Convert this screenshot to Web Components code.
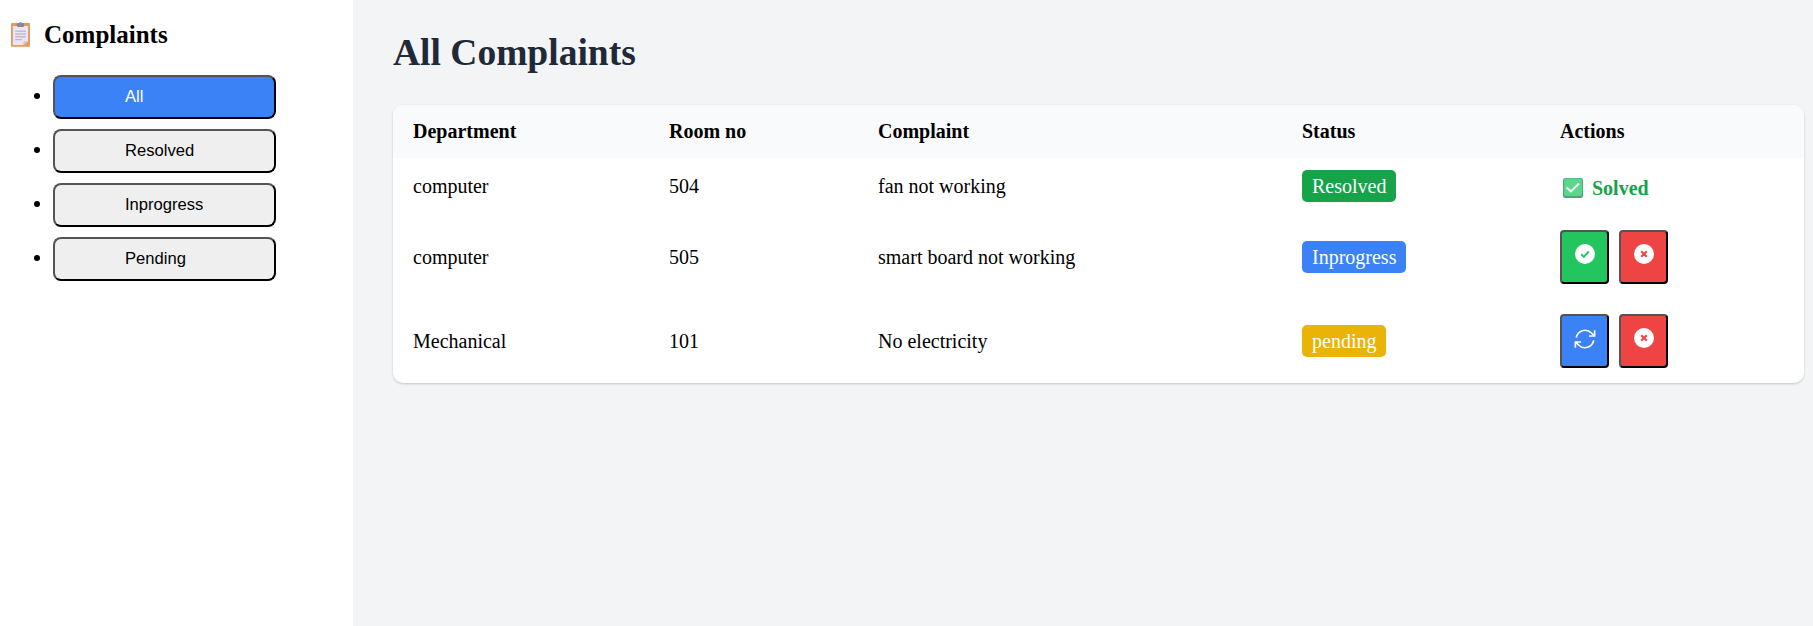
<!DOCTYPE html>
<html>
<head>
<meta charset="utf-8">
<title>Complaints</title>
<style>
  html, body { margin: 0; height: 100%; }
  body { font-family: "Liberation Serif", serif; font-size: 20px; }
</style>
</head>
<body>
<complaints-app></complaints-app>

<script>
const ICONS = {
  check: `<svg width="20" height="20" viewBox="0 0 20 20"><circle cx="10" cy="10" r="10" fill="#fff"/><path d="M6.2 10.3l2.6 2.6 5-5.4" fill="none" stroke="#22c55e" stroke-width="2"/></svg>`,
  cross: `<svg width="20" height="20" viewBox="0 0 20 20"><circle cx="10" cy="10" r="10" fill="#fff"/><path d="M7.2 7.2l5.6 5.6M12.8 7.2l-5.6 5.6" fill="none" stroke="#ef4444" stroke-width="2"/></svg>`,
  sync: `<svg width="22" height="22" viewBox="0 0 24 24" fill="none" stroke="#fff" stroke-width="1.8"><path d="M2.5 10.5A9.7 9.7 0 0 1 19 5.5l3 3"/><path d="M22.5 2.5v6.2h-6.2"/><path d="M21.5 13.5A9.7 9.7 0 0 1 5 18.5l-3-3"/><path d="M1.5 21.5v-6.2h6.2"/></svg>`
};

class ClipboardIcon extends HTMLElement {
  constructor() {
    super();
    this.attachShadow({ mode: "open" });
    this.shadowRoot.innerHTML = `
    <style>
      :host { display: block; width: 19px; height: 25px; }
      svg { display: block; }
    </style>
    <svg width="19" height="25" viewBox="0 0 20 26">
      <rect x="0" y="1" width="20" height="25" rx="1" fill="#e39a5f"/>
      <path d="M2 4h16v16l-5 4H2z" fill="#ebe5f3"/>
      <path d="M13 24l5-4h-5z" fill="#cfc6dc"/>
      <rect x="6" y="1" width="8" height="4" rx="1.5" fill="#8a8494"/>
      <rect x="8.5" y="0" width="3" height="2" rx="1" fill="#8a8494"/>
      <path d="M4.5 9.5h11M4.5 12.5h11M4.5 15.5h11M4.5 18.5h7" stroke="#a9a3b5" stroke-width="1"/>
    </svg>`;
  }
}

class SolvedIcon extends HTMLElement {
  constructor() {
    super();
    this.attachShadow({ mode: "open" });
    this.shadowRoot.innerHTML = `
    <style>
      :host { display: block; width: 20px; height: 20px; }
      svg { display: block; }
    </style>
    <svg width="20" height="20" viewBox="0 0 20 20">
      <rect width="20" height="20" rx="2.5" fill="#47a878"/>
      <rect x="1" y="0.5" width="18" height="17.5" rx="2" fill="#5bd68f"/>
      <path d="M3.5 9.5l4.5 4 8-8" fill="none" stroke="#f2fbf5" stroke-width="2"/>
    </svg>`;
  }
}

class SideLink extends HTMLElement {
  constructor() {
    super();
    this.attachShadow({ mode: "open" });
    this.shadowRoot.innerHTML = `
    <style>
      :host { display: list-item; margin-bottom: 10px; }
      button {
        display: block;
        box-sizing: border-box;
        width: 223px;
        height: 44px;
        padding: 0 0 0 70px;
        text-align: left;
        font: 16.6px "Liberation Sans", Arial, sans-serif;
        color: #000;
        background: #efefef;
        border: 2px outset #000;
        border-radius: 8px;
      }
      :host([active]) button { background: #3b82f6; color: #fff; }
    </style>
    <button><slot></slot></button>`;
  }
}

class SideBar extends HTMLElement {
  constructor() {
    super();
    this.attachShadow({ mode: "open" });
    this.shadowRoot.innerHTML = `
    <style>
      :host { display: block; width: 353px; flex: none; background: #fff; }
      h2 {
        display: flex;
        align-items: center;
        gap: 14px;
        margin: 0;
        padding: 20px 0 0 11px;
        font-size: 25px;
        line-height: 29px;
      }
      ul { margin: 26px 0 0; padding: 0 0 0 53px; }
    </style>
    <h2><clipboard-icon></clipboard-icon>Complaints</h2>
    <ul><slot></slot></ul>`;
  }
}

class StatusPill extends HTMLElement {
  constructor() {
    super();
    this.attachShadow({ mode: "open" });
    this.shadowRoot.innerHTML = `
    <style>
      :host {
        display: inline-block;
        padding: 4.5px 10px;
        border-radius: 5px;
        color: #fff;
        line-height: 23px;
        background: var(--pill, #16a34a);
      }
    </style>
    <slot></slot>`;
  }
}

class ActionButton extends HTMLElement {
  constructor() {
    super();
    this.attachShadow({ mode: "open" });
    this.shadowRoot.innerHTML = `
    <style>
      :host { display: block; }
      button {
        box-sizing: border-box;
        display: flex;
        justify-content: center;
        padding: 12px 0 0;
        width: 49px;
        height: 54px;
        background: var(--btn);
        border: 2px outset #000;
        border-radius: 4px;
      }
    </style>
    <button></button>`;
    this.shadowRoot.querySelector("button").innerHTML = ICONS[this.getAttribute("icon")];
  }
}

class ComplaintRow extends HTMLElement {
  constructor() {
    super();
    this.attachShadow({ mode: "open" });
    this.shadowRoot.innerHTML = `
    <style>
      :host {
        display: grid;
        grid-template-columns: 256px 209px 424px 258px 1fr;
        align-items: center;
        box-sizing: border-box;
        height: var(--row-h, 84px);
        padding-bottom: var(--row-pb, 0);
      }
      .cell { padding-left: 20px; }
      .actions { display: flex; gap: 10px; align-items: center; padding-left: 20px; }
    </style>
    <div class="cell"><slot name="dept"></slot></div>
    <div class="cell"><slot name="room"></slot></div>
    <div class="cell"><slot name="text"></slot></div>
    <div class="cell"><slot name="status"></slot></div>
    <div class="actions"><slot name="actions"></slot></div>`;
  }
}

class ComplaintTable extends HTMLElement {
  constructor() {
    super();
    this.attachShadow({ mode: "open" });
    this.shadowRoot.innerHTML = `
    <style>
      :host {
        display: block;
        background: #fff;
        border-radius: 10px;
        overflow: hidden;
        box-shadow: 0 1px 3px rgba(0,0,0,.1), 0 1px 2px rgba(0,0,0,.1);
      }
      .head {
        display: grid;
        grid-template-columns: 256px 209px 424px 258px 1fr;
        align-items: center;
        height: 53px;
        background: #f9fafb;
        font-weight: bold;
      }
      .head div { padding-left: 20px; }
    </style>
    <div class="head">
      <div>Department</div><div>Room no</div><div>Complaint</div><div>Status</div><div>Actions</div>
    </div>
    <slot></slot>`;
  }
}

class ComplaintsApp extends HTMLElement {
  constructor() {
    super();
    this.attachShadow({ mode: "open" });
    this.shadowRoot.innerHTML = `
    <style>
      :host { display: flex; min-height: 626px; background: #f3f4f6; }
      main { flex: 1; min-width: 0; padding: 31px 9px 0 40px; }
      h1 { margin: 0 0 30px; font-size: 37.5px; line-height: 44px; color: #1f2937; }
      .solved { display: flex; align-items: center; gap: 9px; color: #16a34a; font-weight: bold; margin-left: 3px; margin-top: 4px; }
      .green { --btn: #22c55e; }
      .red { --btn: #ef4444; }
      .blue { --btn: #3b82f6; }
    </style>
    <side-bar>
      <side-link active>All</side-link>
      <side-link>Resolved</side-link>
      <side-link>Inprogress</side-link>
      <side-link>Pending</side-link>
    </side-bar>
    <main>
      <h1>All Complaints</h1>
      <complaint-table>
        <complaint-row style="--row-h: 57px; --row-pb: 1px">
          <span slot="dept">computer</span>
          <span slot="room">504</span>
          <span slot="text">fan not working</span>
          <status-pill slot="status" style="--pill:#16a34a">Resolved</status-pill>
          <div slot="actions" class="solved"><solved-icon></solved-icon>Solved</div>
        </complaint-row>
        <complaint-row>
          <span slot="dept">computer</span>
          <span slot="room">505</span>
          <span slot="text">smart board not working</span>
          <status-pill slot="status" style="--pill:#3b82f6">Inprogress</status-pill>
          <action-button slot="actions" class="green" icon="check"></action-button>
          <action-button slot="actions" class="red" icon="cross"></action-button>
        </complaint-row>
        <complaint-row>
          <span slot="dept">Mechanical</span>
          <span slot="room">101</span>
          <span slot="text">No electricity</span>
          <status-pill slot="status" style="--pill:#eab308">pending</status-pill>
          <action-button slot="actions" class="blue" icon="sync"></action-button>
          <action-button slot="actions" class="red" icon="cross"></action-button>
        </complaint-row>
      </complaint-table>
    </main>`;
  }
}

customElements.define("clipboard-icon", ClipboardIcon);
customElements.define("solved-icon", SolvedIcon);
customElements.define("side-link", SideLink);
customElements.define("side-bar", SideBar);
customElements.define("status-pill", StatusPill);
customElements.define("action-button", ActionButton);
customElements.define("complaint-row", ComplaintRow);
customElements.define("complaint-table", ComplaintTable);
customElements.define("complaints-app", ComplaintsApp);
</script>
</body>
</html>
